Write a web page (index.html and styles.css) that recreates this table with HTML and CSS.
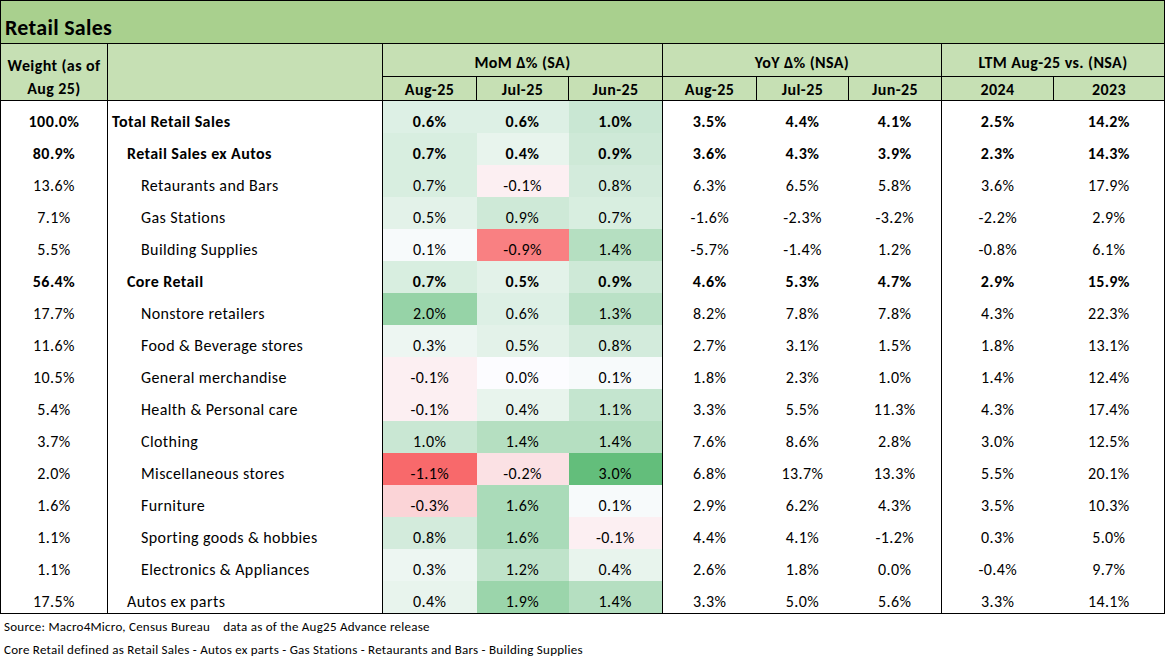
FILE: index.html
```html
<!DOCTYPE html>
<html>
<head>
<meta charset="utf-8">
<link rel="stylesheet" href="styles.css">
</head>
<body>
<table class="sheet">
<colgroup>
<col class="c-w"><col class="c-n">
<col class="c-m1"><col class="c-m2"><col class="c-m3">
<col class="c-y1"><col class="c-y2"><col class="c-y3">
<col class="c-l1"><col class="c-l2">
</colgroup>
<thead>
<tr class="title-row"><th colspan="10" class="title">Retail Sales</th></tr>
<tr class="hdr1">
<th rowspan="2" class="weight-h">Weight (as of<br>Aug 25)</th>
<th rowspan="2"></th>
<th colspan="3">MoM Δ% (SA)</th>
<th colspan="3">YoY Δ% (NSA)</th>
<th colspan="2">LTM Aug-25 vs. (NSA)</th>
</tr>
<tr class="hdr2">
<th>Aug-25</th><th>Jul-25</th><th>Jun-25</th>
<th>Aug-25</th><th>Jul-25</th><th>Jun-25</th>
<th>2024</th><th>2023</th>
</tr>
</thead>
<tbody>
<tr class="b"><td class="w">100.0%</td><td class="n i0">Total Retail Sales</td>
<td class="m" style="background:rgb(221,240,229)">0.6%</td><td class="m" style="background:rgb(221,240,229)">0.6%</td><td class="m" style="background:rgb(201,231,211)">1.0%</td>
<td class="y">3.5%</td><td class="v">4.4%</td><td class="v">4.1%</td><td class="y">2.5%</td><td class="v">14.2%</td></tr>
<tr class="b"><td class="w">80.9%</td><td class="n i1">Retail Sales ex Autos</td>
<td class="m" style="background:rgb(216,238,224)">0.7%</td><td class="m" style="background:rgb(232,244,237)">0.4%</td><td class="m" style="background:rgb(206,233,215)">0.9%</td>
<td class="y">3.6%</td><td class="v">4.3%</td><td class="v">3.9%</td><td class="y">2.3%</td><td class="v">14.3%</td></tr>
<tr><td class="w">13.6%</td><td class="n i2">Retaurants and Bars</td>
<td class="m" style="background:rgb(216,238,224)">0.7%</td><td class="m" style="background:rgb(252,239,242)">-0.1%</td><td class="m" style="background:rgb(211,235,220)">0.8%</td>
<td class="y">6.3%</td><td class="v">6.5%</td><td class="v">5.8%</td><td class="y">3.6%</td><td class="v">17.9%</td></tr>
<tr><td class="w">7.1%</td><td class="n i2">Gas Stations</td>
<td class="m" style="background:rgb(227,242,233)">0.5%</td><td class="m" style="background:rgb(206,233,215)">0.9%</td><td class="m" style="background:rgb(216,238,224)">0.7%</td>
<td class="y">-1.6%</td><td class="v">-2.3%</td><td class="v">-3.2%</td><td class="y">-2.2%</td><td class="v">2.9%</td></tr>
<tr><td class="w">5.5%</td><td class="n i2">Building Supplies</td>
<td class="m" style="background:rgb(247,250,251)">0.1%</td><td class="m" style="background:rgb(249,128,130)">-0.9%</td><td class="m" style="background:rgb(181,223,193)">1.4%</td>
<td class="y">-5.7%</td><td class="v">-1.4%</td><td class="v">1.2%</td><td class="y">-0.8%</td><td class="v">6.1%</td></tr>
<tr class="b"><td class="w">56.4%</td><td class="n i1">Core Retail</td>
<td class="m" style="background:rgb(216,238,224)">0.7%</td><td class="m" style="background:rgb(227,242,233)">0.5%</td><td class="m" style="background:rgb(206,233,215)">0.9%</td>
<td class="y">4.6%</td><td class="v">5.3%</td><td class="v">4.7%</td><td class="y">2.9%</td><td class="v">15.9%</td></tr>
<tr><td class="w">17.7%</td><td class="n i2">Nonstore retailers</td>
<td class="m" style="background:rgb(150,211,167)">2.0%</td><td class="m" style="background:rgb(221,240,229)">0.6%</td><td class="m" style="background:rgb(186,225,198)">1.3%</td>
<td class="y">8.2%</td><td class="v">7.8%</td><td class="v">7.8%</td><td class="y">4.3%</td><td class="v">22.3%</td></tr>
<tr><td class="w">11.6%</td><td class="n i2">Food &amp; Beverage stores</td>
<td class="m" style="background:rgb(237,246,242)">0.3%</td><td class="m" style="background:rgb(227,242,233)">0.5%</td><td class="m" style="background:rgb(211,235,220)">0.8%</td>
<td class="y">2.7%</td><td class="v">3.1%</td><td class="v">1.5%</td><td class="y">1.8%</td><td class="v">13.1%</td></tr>
<tr><td class="w">10.5%</td><td class="n i2">General merchandise</td>
<td class="m" style="background:rgb(252,239,242)">-0.1%</td><td class="m" style="background:rgb(252,252,255)">0.0%</td><td class="m" style="background:rgb(247,250,251)">0.1%</td>
<td class="y">1.8%</td><td class="v">2.3%</td><td class="v">1.0%</td><td class="y">1.4%</td><td class="v">12.4%</td></tr>
<tr><td class="w">5.4%</td><td class="n i2">Health &amp; Personal care</td>
<td class="m" style="background:rgb(252,239,242)">-0.1%</td><td class="m" style="background:rgb(232,244,237)">0.4%</td><td class="m" style="background:rgb(196,229,207)">1.1%</td>
<td class="y">3.3%</td><td class="v">5.5%</td><td class="v">11.3%</td><td class="y">4.3%</td><td class="v">17.4%</td></tr>
<tr><td class="w">3.7%</td><td class="n i2">Clothing</td>
<td class="m" style="background:rgb(201,231,211)">1.0%</td><td class="m" style="background:rgb(181,223,193)">1.4%</td><td class="m" style="background:rgb(181,223,193)">1.4%</td>
<td class="y">7.6%</td><td class="v">8.6%</td><td class="v">2.8%</td><td class="y">3.0%</td><td class="v">12.5%</td></tr>
<tr><td class="w">2.0%</td><td class="n i2">Miscellaneous stores</td>
<td class="m" style="background:rgb(248,105,107)">-1.1%</td><td class="m" style="background:rgb(251,225,228)">-0.2%</td><td class="m" style="background:rgb(99,190,123)">3.0%</td>
<td class="y">6.8%</td><td class="v">13.7%</td><td class="v">13.3%</td><td class="y">5.5%</td><td class="v">20.1%</td></tr>
<tr><td class="w">1.6%</td><td class="n i2">Furniture</td>
<td class="m" style="background:rgb(251,212,215)">-0.3%</td><td class="m" style="background:rgb(170,219,185)">1.6%</td><td class="m" style="background:rgb(247,250,251)">0.1%</td>
<td class="y">2.9%</td><td class="v">6.2%</td><td class="v">4.3%</td><td class="y">3.5%</td><td class="v">10.3%</td></tr>
<tr><td class="w">1.1%</td><td class="n i2">Sporting goods &amp; hobbies</td>
<td class="m" style="background:rgb(211,235,220)">0.8%</td><td class="m" style="background:rgb(170,219,185)">1.6%</td><td class="m" style="background:rgb(252,239,242)">-0.1%</td>
<td class="y">4.4%</td><td class="v">4.1%</td><td class="v">-1.2%</td><td class="y">0.3%</td><td class="v">5.0%</td></tr>
<tr><td class="w">1.1%</td><td class="n i2">Electronics &amp; Appliances</td>
<td class="m" style="background:rgb(237,246,242)">0.3%</td><td class="m" style="background:rgb(191,227,202)">1.2%</td><td class="m" style="background:rgb(232,244,237)">0.4%</td>
<td class="y">2.6%</td><td class="v">1.8%</td><td class="v">0.0%</td><td class="y">-0.4%</td><td class="v">9.7%</td></tr>
<tr><td class="w">17.5%</td><td class="n i1">Autos ex parts</td>
<td class="m" style="background:rgb(232,244,237)">0.4%</td><td class="m" style="background:rgb(155,213,171)">1.9%</td><td class="m" style="background:rgb(181,223,193)">1.4%</td>
<td class="y">3.3%</td><td class="v">5.0%</td><td class="v">5.6%</td><td class="y">3.3%</td><td class="v">14.1%</td></tr>
</tbody>
</table>
<div class="notes">
<p>Source: Macro4Micro, Census Bureau<span class="gap"></span>data as of the Aug25 Advance release</p>
<p>Core Retail defined as Retail Sales - Autos ex parts - Gas Stations - Retaurants and Bars - Building Supplies</p>
</div>
</body>
</html>
```
FILE: styles.css
```css
html, body {
  margin: 0;
  padding: 0;
  background: #ffffff;
}
body {
  font-family: Carlito, Lato, "Liberation Sans", sans-serif;
  color: #000000;
  width: 1165px;
}
.sheet {
  border-collapse: collapse;
  table-layout: fixed;
  width: 1165px;
  font-size: 16px;
  letter-spacing: 0.4px;
}
.c-w { width: 107px; }
.c-n { width: 275px; }
.c-m1 { width: 94px; }
.c-m2 { width: 92px; }
.c-m3 { width: 94px; }
.c-y1 { width: 94px; }
.c-y2 { width: 92px; }
.c-y3 { width: 93px; }
.c-l1 { width: 112px; }
.c-l2 { width: 111px; }

.sheet th, .sheet td {
  padding: 0;
  border: 0;
  white-space: nowrap;
  overflow: hidden;
}
.sheet .title-row th {
  background: #a9d08e;
  height: 39px;
  text-align: left;
  vertical-align: bottom;
  padding: 0 0 3px 4px;
  font-size: 22px;
  letter-spacing: 0.3px;
  font-weight: 700;
  border: 1px solid #000;
  line-height: 24px;
}
.sheet .hdr1 th, .sheet .hdr2 th {
  background: #c6e0b4;
  border: 1px solid #000;
  font-weight: 700;
  text-align: center;
}
.sheet .hdr1 th {
  height: 28px;
  vertical-align: bottom;
  padding-bottom: 4px;
  line-height: 18px;
}
.sheet .hdr2 th {
  height: 22px;
  vertical-align: bottom;
  padding-bottom: 1px;
  line-height: 18px;
}
.sheet .hdr1 .weight-h {
  line-height: 23px;
  vertical-align: bottom;
  padding: 0;
}
.sheet tbody td {
  height: 30px;
  vertical-align: bottom;
  padding-bottom: 2px;
  line-height: 18px;
  text-align: center;
}
.sheet tbody tr:last-child td { border-bottom: 1px solid #000; }
.sheet td.w { border-left: 1px solid #000; border-right: 1px solid #000; }
.sheet td.n { text-align: left; border-right: 1px solid #000; }
.sheet td.y { border-left: 1px solid #000; }
.sheet td.v:last-child { border-right: 1px solid #000; }
.sheet td.i0 { padding-left: 4px; }
.sheet td.i1 { padding-left: 19px; }
.sheet td.i2 { padding-left: 33px; }
.sheet .b td { font-weight: 700; }

.notes {
  font-size: 13px;
  letter-spacing: 0.25px;
  padding-left: 4px;
}
.notes p {
  margin: 0;
  height: 23px;
  line-height: 23px;
}
.notes p:first-child { margin-top: 1px; }
.gap {
  display: inline-block;
  width: 13px;
}
```
